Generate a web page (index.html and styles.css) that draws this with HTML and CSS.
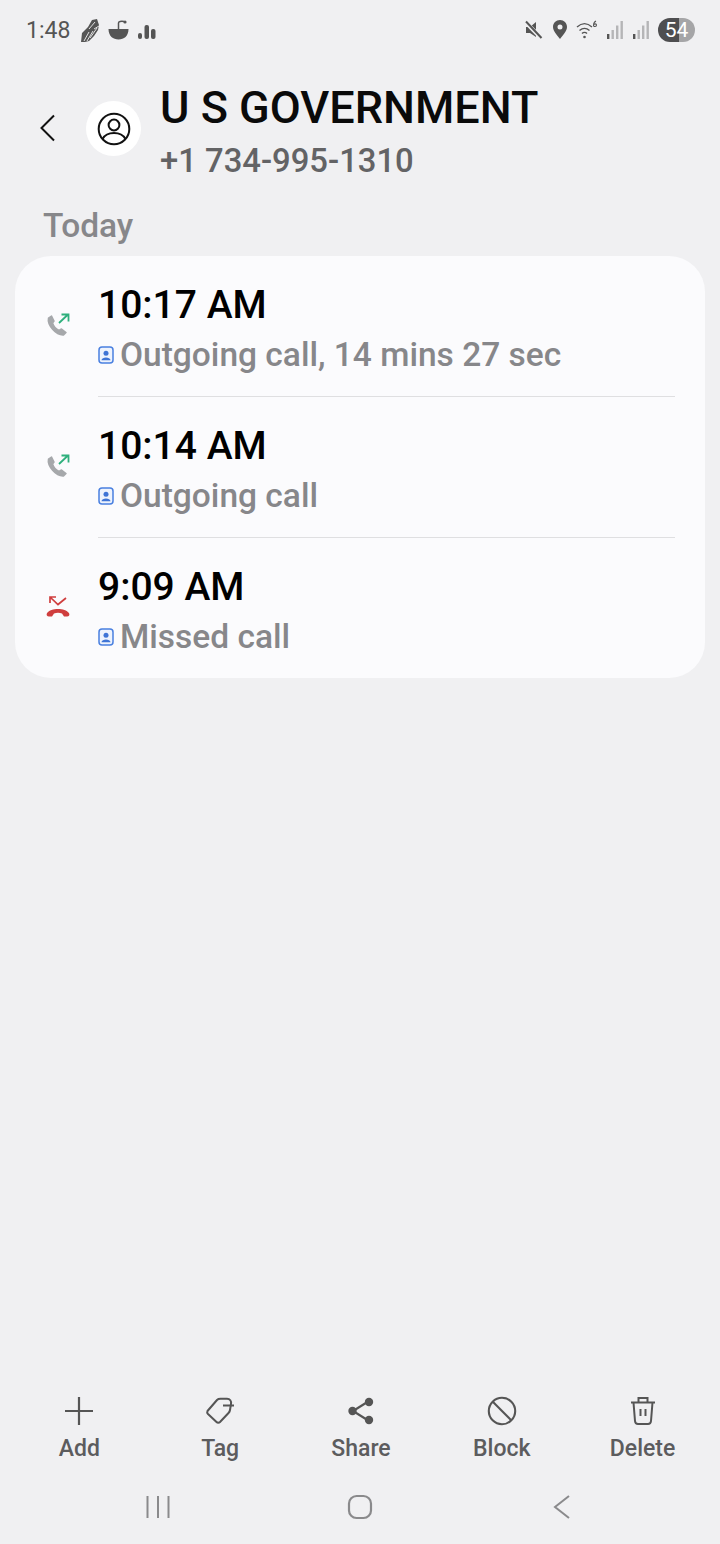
FILE: index.html
```html
<!DOCTYPE html>
<html lang="en">
<head>
    <meta charset="UTF-8">
    <meta name="viewport" content="width=device-width, initial-scale=1.0">
    <title>Call details</title>
    <link rel="stylesheet" href="styles.css">
</head>
<body>
    <div class="status-bar">
        <div class="status-left">
            <span class="clock">1:48</span>
            <svg class="st-icon" width="20" height="25" viewBox="0 0 20 25"><path d="M1 24 L2 15 L8 9 L12 2 L17 1 L19 7 L18 12 L14 18 L9 23 L5 24Z" fill="#555"/><path d="M4 23 L9 14 M7 23 L13 13 M10 20 L17 10 M9 11 L15 4 M14 11 L19 8" stroke="#f0f0f2" stroke-width="0.900"/></svg>
            <svg class="st-icon" width="21" height="24" viewBox="0 0 21 24"><path d="M0.500 11 H20.500 C20.500 18 16 21.500 10.500 21.500 C5 21.500 0.500 18 0.500 11Z" fill="#555"/><path d="M10.500 11 V5 C10.500 3.500 13 3 16 3.500" stroke="#555" stroke-width="1.500" fill="none"/><circle cx="17" cy="4" r="1.600" fill="#555"/></svg>
            <svg class="st-icon" width="20" height="24" viewBox="0 0 20 24"><rect x="1" y="15" width="4" height="6" rx="2" fill="#555"/><rect x="7.500" y="7" width="4.500" height="14" rx="2" fill="#555"/><rect x="14" y="11" width="4.500" height="10" rx="2" fill="#555"/></svg>
        </div>
        <div class="status-right">
            <svg class="st-icon" width="20" height="22" viewBox="0 0 20 22"><path d="M2 8 H6 L12 3 V18 L6 14 H2Z" fill="#555"/><path d="M1.500 3 L18 20" stroke="#f0f0f2" stroke-width="4"/><path d="M2 2.500 L17.500 19" stroke="#555" stroke-width="2"/></svg>
            <svg class="st-icon pin" width="16" height="22" viewBox="0 0 16 22"><path fill-rule="evenodd" d="M8 1 C12 1 15 4 15 8 C15 12 11 16 8 20 C5 16 1 12 1 8 C1 4 4 1 8 1Z M8 5.500 A2.500 2.500 0 1 0 8 10.500 A2.500 2.500 0 1 0 8 5.500Z" fill="#555"/></svg>
            <svg class="st-icon wifi" width="22" height="22" viewBox="0 0 22 22"><path d="M1 8 C6 3.500 11 3.500 16 8 M3.500 11.500 C7 8.500 10 8.500 13.500 11.500 M6 14.500 C7.500 13 9.500 13 11 14.500" stroke="#555" stroke-width="1.400" fill="none"/><circle cx="8.500" cy="18" r="1.300" fill="#555"/><path d="M20 2 C18 3 17.500 5 17.500 6.500 C17.500 8 20.500 8 20.500 6 C20.500 4.500 18 4.500 17.500 6" stroke="#555" stroke-width="1.100" fill="none"/></svg>
            <svg class="st-icon signal" width="18" height="20" viewBox="0 0 18 20"><rect x="1" y="14" width="2.400" height="5" fill="#555"/><rect x="5.500" y="10" width="2.400" height="9" fill="#b5b5b7"/><rect x="10" y="5.500" width="2.400" height="13.500" fill="#b5b5b7"/><rect x="14.500" y="1" width="2.400" height="18" fill="#b5b5b7"/></svg>
            <svg class="st-icon signal" width="18" height="20" viewBox="0 0 18 20"><rect x="1" y="14" width="2.400" height="5" fill="#555"/><rect x="5.500" y="10" width="2.400" height="9" fill="#b5b5b7"/><rect x="10" y="5.500" width="2.400" height="13.500" fill="#b5b5b7"/><rect x="14.500" y="1" width="2.400" height="18" fill="#b5b5b7"/></svg>
            <span class="battery">54</span>
        </div>
    </div>

    <div class="header">
        <svg class="back" width="18" height="28" viewBox="0 0 18 28"><path d="M15 1.500 L2.500 14 L15 26.500" stroke="#111" stroke-width="2" fill="none"/></svg>
        <div class="avatar">
            <svg width="34" height="34" viewBox="0 0 34 34"><circle cx="17" cy="17" r="15.300" stroke="#111" stroke-width="2" fill="none"/><circle cx="17" cy="13" r="5.400" stroke="#111" stroke-width="2" fill="none"/><path d="M5.500 27 C8 22.500 12 21 17 21 C22 21 26 22.500 28.500 27" stroke="#111" stroke-width="2" fill="none"/></svg>
        </div>
        <div class="header-text">
            <div class="name">U S GOVERNMENT</div>
            <div class="number">+1 734-995-1310</div>
        </div>
    </div>

    <div class="section-title">Today</div>

    <div class="card">
        <div class="row">
            <svg class="call-icon" width="26" height="26" viewBox="0 0 26 26"><path d="M3.500 6 L6.500 4 L9 9 L7.500 11 C8.500 14 11 17 14 18.500 L16.500 17 L21 20.500 L18.500 23 C11 23.500 2 13 3.500 6Z" fill="#a6a8ab" stroke="#a6a8ab" stroke-width="1.500" stroke-linejoin="round"/><path d="M14 11 L23 2.500 M16.500 2.500 H23.500 V9.500" stroke="#2fb07d" stroke-width="1.800" fill="none"/></svg>
            <div class="row-body">
                <div class="time">10:17 AM</div>
                <div class="detail"><svg class="contact" width="16" height="18" viewBox="0 0 16 18"><rect x="1" y="1" width="14" height="16" rx="3" fill="#eef3fd" stroke="#4a80e0" stroke-width="1.500"/><circle cx="8" cy="7.300" r="2.500" fill="#3f74d6"/><path d="M3.500 14.200 C3.800 10.500 12.200 10.500 12.500 14.200Z" fill="#3f74d6"/></svg><span>Outgoing call, 14 mins 27 sec</span></div>
            </div>
        </div>
        <div class="row">
            <svg class="call-icon" width="26" height="26" viewBox="0 0 26 26"><path d="M3.500 6 L6.500 4 L9 9 L7.500 11 C8.500 14 11 17 14 18.500 L16.500 17 L21 20.500 L18.500 23 C11 23.500 2 13 3.500 6Z" fill="#a6a8ab" stroke="#a6a8ab" stroke-width="1.500" stroke-linejoin="round"/><path d="M14 11 L23 2.500 M16.500 2.500 H23.500 V9.500" stroke="#2fb07d" stroke-width="1.800" fill="none"/></svg>
            <div class="row-body">
                <div class="time">10:14 AM</div>
                <div class="detail"><svg class="contact" width="16" height="18" viewBox="0 0 16 18"><rect x="1" y="1" width="14" height="16" rx="3" fill="#eef3fd" stroke="#4a80e0" stroke-width="1.500"/><circle cx="8" cy="7.300" r="2.500" fill="#3f74d6"/><path d="M3.500 14.200 C3.800 10.500 12.200 10.500 12.500 14.200Z" fill="#3f74d6"/></svg><span>Outgoing call</span></div>
            </div>
        </div>
        <div class="row">
            <svg class="call-icon" width="26" height="26" viewBox="0 0 26 26"><path d="M2 19 C6 13.500 20 13.500 24 19 C25 21 24 22.500 22 22.500 L19 22.500 L17 19.500 C14.500 18.500 11.500 18.500 9 19.500 L7 22.500 L4 22.500 C2 22.500 1 21 2 19Z" fill="#cf3e3e"/><path d="M21 4 L13 10.500 L5.500 3.500 M5 9 V3 H11" stroke="#cf3e3e" stroke-width="1.700" fill="none"/></svg>
            <div class="row-body">
                <div class="time">9:09 AM</div>
                <div class="detail"><svg class="contact" width="16" height="18" viewBox="0 0 16 18"><rect x="1" y="1" width="14" height="16" rx="3" fill="#eef3fd" stroke="#4a80e0" stroke-width="1.500"/><circle cx="8" cy="7.300" r="2.500" fill="#3f74d6"/><path d="M3.500 14.200 C3.800 10.500 12.200 10.500 12.500 14.200Z" fill="#3f74d6"/></svg><span>Missed call</span></div>
            </div>
        </div>
    </div>

    <div class="spacer"></div>

    <div class="actions">
        <div class="action">
            <svg width="30" height="30" viewBox="0 0 30 30"><path d="M15 1 V29 M1 15 H29" stroke="#555" stroke-width="2.200"/></svg>
            <span>Add</span>
        </div>
        <div class="action">
            <svg width="30" height="30" viewBox="0 0 30 30"><path d="M2.500 15 L12 4 C13 3 14 2.800 15.500 2.800 H22 C25 2.800 26.500 5 26 8 L25 14 C24.800 15.500 24.500 16 23.500 17 L15 26 C14 27 12.500 27 11.500 26 L3 18 C2 17 2 16 2.500 15Z" stroke="#555" stroke-width="2" fill="none"/><path d="M18 9.500 H29" stroke="#555" stroke-width="2"/></svg>
            <span>Tag</span>
        </div>
        <div class="action">
            <svg width="30" height="30" viewBox="0 0 30 30"><path d="M23 5 L7 15 L23 25" stroke="#555" stroke-width="2.200" fill="none"/><circle cx="23" cy="6" r="4.200" fill="#555"/><circle cx="6.500" cy="15" r="4.200" fill="#555"/><circle cx="23" cy="24" r="4.200" fill="#555"/></svg>
            <span>Share</span>
        </div>
        <div class="action">
            <svg width="30" height="30" viewBox="0 0 30 30"><circle cx="15" cy="15" r="13.200" stroke="#555" stroke-width="2.100" fill="none"/><path d="M5.800 5.800 L24.200 24.200" stroke="#555" stroke-width="2.100"/></svg>
            <span>Block</span>
        </div>
        <div class="action">
            <svg width="30" height="30" viewBox="0 0 30 30"><path d="M3 6.500 H27 M10.500 6.500 V2 H19.500 V6.500 M5.500 6.500 L7 25 C7.200 27 8.500 28 10 28 H20 C21.500 28 22.800 27 23 25 L24.500 6.500" stroke="#555" stroke-width="2" fill="none"/><path d="M12.500 13 V20 M17.500 13 V20" stroke="#555" stroke-width="2"/></svg>
            <span>Delete</span>
        </div>
    </div>

    <div class="nav-bar">
        <svg width="24" height="24" viewBox="0 0 24 24"><path d="M1.500 1 V23 M12 1 V23 M22.500 1 V23" stroke="#8a8a8c" stroke-width="2"/></svg>
        <svg width="26" height="26" viewBox="0 0 26 26"><rect x="2" y="2" width="22" height="22" rx="7.500" stroke="#8a8a8c" stroke-width="2.200" fill="none"/></svg>
        <svg width="18" height="26" viewBox="0 0 18 26"><path d="M16 2 L2 13 L16 24" stroke="#8a8a8c" stroke-width="2" fill="none"/></svg>
    </div>
</body>
</html>
```

FILE: styles.css
```css
body {
    margin: 0;
    height: 1544px;
    background-color: #f0f0f2;
    font-family: Roboto, sans-serif;
    display: flex;
    flex-direction: column;
    overflow: hidden;
}
.status-bar {
    height: 60px;
    padding: 0 25px 0 26px;
    display: flex;
    align-items: center;
    justify-content: space-between;
    color: #555;
}
.status-left, .status-right {
    display: flex;
    align-items: center;
}
.status-left { gap: 8px; }
.status-right { gap: 8px; }
.clock {
    font-size: 23px;
    margin-right: 2px;
}
.st-icon { display: block; }
.battery {
    width: 37px;
    height: 24px;
    border-radius: 12px;
    background: linear-gradient(to right, #4e4e50 0, #4e4e50 57%, #a5a5a7 57%, #a5a5a7 100%);
    color: #fff;
    font-size: 21px;
    line-height: 24px;
    text-align: center;
}
.header {
    height: 134px;
    display: flex;
    align-items: flex-start;
    padding-left: 39px;
}
.back {
    margin-top: 54px;
    margin-right: 29px;
}
.avatar {
    width: 55px;
    height: 55px;
    border-radius: 50%;
    background-color: #fff;
    margin-top: 41px;
    margin-right: 19px;
    display: flex;
    align-items: center;
    justify-content: center;
}
.header-text { padding-top: 19px; }
.name {
    font-size: 45px;
    font-weight: 500;
    line-height: 58px;
    color: #0a0a0a;
}
.number {
    font-size: 32.8px;
    font-weight: 500;
    line-height: 48px;
    color: #636365;
}
.section-title {
    height: 62px;
    padding-left: 43px;
    font-size: 33.5px;
    font-weight: 500;
    line-height: 64px;
    color: #87878a;
}
.card {
    margin: 0 15px;
    height: 422px;
    border-radius: 36px;
    background-color: #fbfbfd;
    padding: 0 30px;
}
.row {
    height: 141px;
    display: flex;
    align-items: flex-start;
}
.call-icon {
    margin-top: 56px;
    margin-right: 27px;
    flex: none;
}
.row-body {
    flex: 1;
    padding-top: 26px;
    height: 114px;
    border-bottom: 1px solid #dfdfe1;
}
.row:last-child .row-body { border-bottom: none; }
.time {
    font-size: 39px;
    font-weight: 500;
    line-height: 46px;
    color: #000;
}
.detail {
    display: flex;
    align-items: center;
    font-size: 33.5px;
    font-weight: 500;
    line-height: 53px;
    color: #87878a;
}
.contact {
    margin-right: 6px;
    flex: none;
}
.spacer { flex: 1; }
.actions {
    padding: 0 7px 0 9px;
    display: flex;
}
.action {
    flex: 1;
    display: flex;
    flex-direction: column;
    align-items: center;
    color: #5c5c5e;
    font-size: 23px;
    font-weight: 500;
}
.action span {
    line-height: 26px;
    margin-top: 10px;
}
.nav-bar {
    height: 74px;
    padding-top: 8px;
    display: grid;
    grid-template-columns: repeat(3, 202px);
    justify-content: center;
    justify-items: center;
    align-items: center;
}
```
